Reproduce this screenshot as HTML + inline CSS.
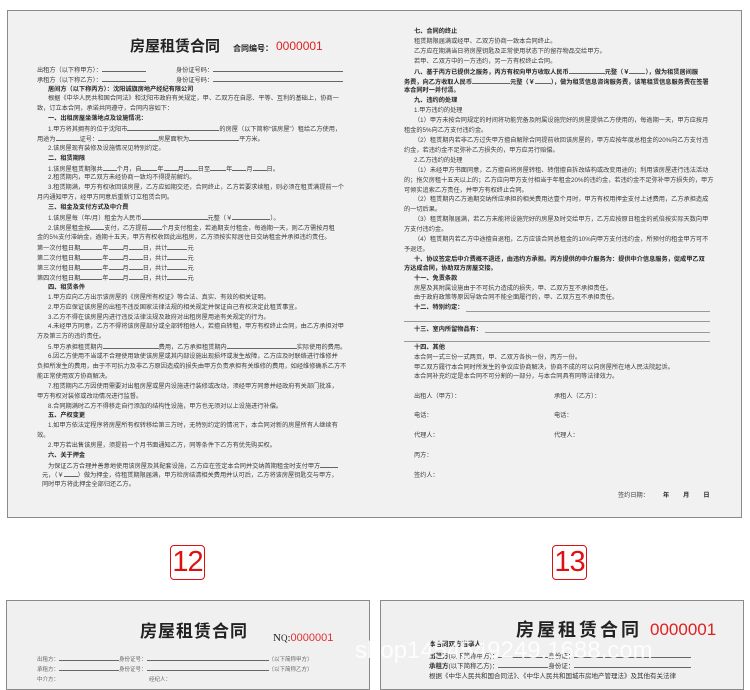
<!DOCTYPE html>
<html><head><meta charset="utf-8"><style>
*{margin:0;padding:0;box-sizing:border-box}
body{width:750px;height:681px;background:#fff;position:relative;overflow:hidden;font-family:"Liberation Sans","Noto Sans CJK SC",sans-serif}
.p{position:absolute;background:#f1f1f1;border:1px solid #8a8a8a}
.l{position:absolute;font-size:6.2px;line-height:8px;white-space:nowrap;color:#3c3c3c}
.b{font-weight:bold;color:#2a2a2a}
.u{display:inline-block;border-bottom:0.8px solid #666;height:6px;vertical-align:baseline}
.hr{position:absolute;height:0;border-top:1px solid #999}
.num{position:absolute;border:1.5px solid #e01010;border-radius:4px;color:#e01010;font-size:29px;line-height:33px;text-align:center;font-family:"Liberation Sans Narrow","Liberation Sans",sans-serif;width:35px;height:35px;letter-spacing:-1px}
</style></head><body>

<div class="p" style="left:7px;top:10px;width:735px;height:508px"></div>
<div style="position:absolute;left:130px;top:38px;font-size:15px;font-weight:bold;color:#222;line-height:18px">房屋租赁合同</div>
<div style="position:absolute;left:233px;top:43px;font-size:8px;font-weight:bold;color:#222">合同编号：</div>
<div style="position:absolute;left:276px;top:39px;font-size:12px;color:#e02020;line-height:14px">0000001</div>

<div class="l" style="left:37px;top:66px">出租方（以下称甲方）：<span class="u" style="width:44px"></span><span style="margin-left:30px">身份证号码：</span><span class="u" style="width:130px"></span></div>
<div class="l" style="left:37px;top:76px">承租方（以下称乙方）：<span class="u" style="width:44px"></span><span style="margin-left:30px">身份证号码：</span><span class="u" style="width:130px"></span></div>
<div class="l b" style="left:48px;top:86px">居间方（以下称丙方）：沈阳诚旗房地产经纪有限公司</div>
<div class="l" style="left:48px;top:95px">根据《中华人民共和国合同法》和沈阳市政府有关规定，甲、乙双方在自愿、平等、互利的基础上，协商一</div>
<div class="l" style="left:37px;top:105px">致，订立本合同，承诺共同遵守，合同内容如下：</div>
<div class="l b" style="left:48px;top:115px">一、出租房屋坐落地点及设施情况：</div>
<div class="l" style="left:48px;top:125px">1.甲方将其拥有的位于沈阳市<span class="u" style="width:92px"></span>的房屋（以下简称“该房屋”）租给乙方使用，</div>
<div class="l" style="left:37px;top:135px">用途为<span class="u" style="width:24px"></span>证号：<span class="u" style="width:60px"></span>房屋面积为<span class="u" style="width:50px"></span>平方米。</div>
<div class="l" style="left:48px;top:145px">2.该房屋现有装修及设施情况见特别约定。</div>
<div class="l b" style="left:48px;top:155px">二、租赁期限</div>
<div class="l" style="left:48px;top:165px">1.该房屋租赁期限共<span class="u" style="width:14px"></span>个月，自<span class="u" style="width:16px"></span>年<span class="u" style="width:14px"></span>月<span class="u" style="width:14px"></span>日至<span class="u" style="width:16px"></span>年<span class="u" style="width:14px"></span>月<span class="u" style="width:14px"></span>日。</div>
<div class="l" style="left:48px;top:174px">2.租赁期内，甲乙双方未经协商一致均不得提前解约。</div>
<div class="l" style="left:48px;top:184px">3.租赁期满，甲方有权收回该房屋，乙方应如期交还，合同终止，乙方若要求续租，则必须在租赁满提前一个</div>
<div class="l" style="left:37px;top:194px">月内通知甲方，经甲方同意后重新订立租赁合同。</div>
<div class="l b" style="left:48px;top:204px">三、租金及支付方式及中介费</div>
<div class="l" style="left:48px;top:214px">1.该房屋每（年/月）租金为人民币<span class="u" style="width:66px"></span>元整（￥<span class="u" style="width:38px"></span>）。</div>
<div class="l" style="left:48px;top:224px">2.该房屋租金按<span class="u" style="width:14px"></span>支付，乙方提前<span class="u" style="width:14px"></span>个月支付租金，若逾期支付租金，每逾期一天，则乙方需按月租</div>
<div class="l" style="left:37px;top:234px">金的5%支付滞纳金，逾期十五天，甲方有权收回此出租房，乙方须按实际居住日交纳租金并承担违约责任。</div>
<div class="l" style="left:37px;top:244px">第一次付租日期<span class="u" style="width:22px"></span>年<span class="u" style="width:14px"></span>月<span class="u" style="width:14px"></span>日，共计<span class="u" style="width:20px"></span>元</div>
<div class="l" style="left:37px;top:254px">第二次付租日期<span class="u" style="width:22px"></span>年<span class="u" style="width:14px"></span>月<span class="u" style="width:14px"></span>日，共计<span class="u" style="width:20px"></span>元</div>
<div class="l" style="left:37px;top:264px">第三次付租日期<span class="u" style="width:22px"></span>年<span class="u" style="width:14px"></span>月<span class="u" style="width:14px"></span>日，共计<span class="u" style="width:20px"></span>元</div>
<div class="l" style="left:37px;top:274px">第四次付租日期<span class="u" style="width:22px"></span>年<span class="u" style="width:14px"></span>月<span class="u" style="width:14px"></span>日，共计<span class="u" style="width:20px"></span>元</div>
<div class="l b" style="left:48px;top:284px">四、租赁条件</div>
<div class="l" style="left:48px;top:294px">1.甲方应向乙方出示该房屋的《房屋所有权证》等合法、真实、有效的相关证明。</div>
<div class="l" style="left:48px;top:304px">2.甲方应保证该房屋的出租不违反国家法律法规的相关规定并保证自己有权决定此租赁事宜。</div>
<div class="l" style="left:48px;top:314px">3.乙方不得在该房屋内进行违反法律法规及政府对出租房屋用途有关规定的行为。</div>
<div class="l" style="left:48px;top:323px">4.未经甲方同意，乙方不得将该房屋部分或全部转租他人，若擅自转租，甲方有权终止合同，由乙方承担对甲</div>
<div class="l" style="left:37px;top:333px">方及第三方的违约责任。</div>
<div class="l" style="left:48px;top:343px">5.甲方承担租赁期内<span class="u" style="width:56px"></span>费用，乙方承担租赁期内<span class="u" style="width:70px"></span>实际使用的费用。</div>
<div class="l" style="left:48px;top:353px">6.因乙方使用不当或不合理使用致使该房屋或其内部设施出现损坏或发生故障，乙方应及时联络进行维修并</div>
<div class="l" style="left:37px;top:363px">负担所发生的费用，由于不可抗力及非乙方原因造成的损失由甲方负责承担有关维修的费用，如经维修确系乙方不</div>
<div class="l" style="left:37px;top:373px">能正常使用双方协商解决。</div>
<div class="l" style="left:48px;top:383px">7.租赁期内乙方因使用需要对出租房屋或屋内设施进行装修或改动，须经甲方同意并经政府有关部门批准，</div>
<div class="l" style="left:37px;top:393px">甲方有权对装修或改动情况进行监督。</div>
<div class="l" style="left:48px;top:403px">8.合同期满时乙方不得移走自行添加的结构性设施，甲方也无须对以上设施进行补偿。</div>
<div class="l b" style="left:48px;top:412px">五、产权变更</div>
<div class="l" style="left:48px;top:422px">1.如甲方依法定程序将房屋所有权转移给第三方时，无特别约定的情况下，本合同对新的房屋所有人继续有</div>
<div class="l" style="left:37px;top:432px">效。</div>
<div class="l" style="left:48px;top:442px">2.甲方若出售该房屋，须提前一个月书面通知乙方，同等条件下乙方有优先购买权。</div>
<div class="l b" style="left:48px;top:452px">六、关于押金</div>
<div class="l" style="left:48px;top:462px">为保证乙方合理并善意地使用该房屋及其配套设施，乙方应在签定本合同并交纳首期租金时支付甲方<span class="u" style="width:18px"></span></div>
<div class="l" style="left:42px;top:471px">元，（￥<span class="u" style="width:14px"></span>）做为押金，待租赁期限届满，甲方检房结清相关费用并认可后，乙方将该房屋钥匙交与甲方，</div>
<div class="l" style="left:42px;top:481px">同时甲方将此押金全部归还乙方。</div>

<div class="l b" style="left:414px;top:28px">七、合同的终止</div>
<div class="l" style="left:414px;top:38px">租赁期限届满或经甲、乙双方协商一致本合同终止。</div>
<div class="l" style="left:414px;top:48px">乙方应在期满当日将房屋钥匙及正常使用状态下的留存物品交给甲方。</div>
<div class="l" style="left:414px;top:58px">若甲、乙双方中的一方违约，另一方有权终止合同。</div>
<div class="l b" style="left:414px;top:68px">八、基于丙方已提供之服务，丙方有权向甲方收取人民币<span class="u" style="width:36px"></span>元整（￥<span class="u" style="width:16px"></span>），做为租赁居间服</div>
<div class="l b" style="left:404px;top:78px">务费，向乙方收取人民币<span class="u" style="width:38px"></span>元整（￥<span class="u" style="width:16px"></span>），做为租赁信息咨询服务费，该笔租赁信息服务费在签署</div>
<div class="l b" style="left:404px;top:87px">本合同时一并付清。</div>
<div class="l b" style="left:414px;top:97px">九、违约的处理</div>
<div class="l" style="left:414px;top:107px">1.甲方违约的处理</div>
<div class="l" style="left:414px;top:117px">（1）甲方未按合同规定的时间将功能完备及附属设施完好的房屋提供乙方使用的，每逾期一天，甲方应按月</div>
<div class="l" style="left:404px;top:127px">租金的5%向乙方支付违约金。</div>
<div class="l" style="left:414px;top:137px">（2）租赁期内若非乙方过失甲方擅自解除合同提前收回该房屋的，甲方应按年度总租金的20%向乙方支付违</div>
<div class="l" style="left:404px;top:147px">约金，若违约金不足弥补乙方损失的，甲方应另行赔偿。</div>
<div class="l" style="left:414px;top:157px">2.乙方违约的处理</div>
<div class="l" style="left:414px;top:167px">（1）未经甲方书面同意，乙方擅自将房屋转租、转借擅自拆改结构或改变用途的；利用该房屋进行违法活动</div>
<div class="l" style="left:404px;top:177px">的；拖欠房租十五天以上的；乙方应向甲方支付相当于年租金20%的违约金，若违约金不足弥补甲方损失的，甲方</div>
<div class="l" style="left:404px;top:187px">可倾实追索乙方责任，并甲方有权终止合同。</div>
<div class="l" style="left:414px;top:196px">（2）租赁期内乙方逾期交纳所应承担的相关费用达壹个月时，甲方有权用押金支付上述费用，乙方承担造成</div>
<div class="l" style="left:404px;top:206px">的一切后果。</div>
<div class="l" style="left:414px;top:216px">（3）租赁期限届满，若乙方未能将设施完好的房屋及时交给甲方，乙方应按原日租金的贰倍按实际天数向甲</div>
<div class="l" style="left:404px;top:226px">方支付违约金。</div>
<div class="l" style="left:414px;top:236px">（4）租赁期内若乙方中途擅自退租，乙方应该合同总租金的10%向甲方支付违约金，所预付的租金甲方可不</div>
<div class="l" style="left:404px;top:246px">予退还。</div>
<div class="l b" style="left:414px;top:256px">十、协议签定后中介费概不退还，由违约方承担。丙方提供的中介服务为：提供中介信息服务，促成甲乙双</div>
<div class="l b" style="left:404px;top:265px">方达成合同，协助双方房屋交接。</div>
<div class="l b" style="left:414px;top:275px">十一、免责条款</div>
<div class="l" style="left:414px;top:285px">房屋及其附属设施由于不可抗力造成的损失，甲、乙双方互不承担责任。</div>
<div class="l" style="left:414px;top:294px">由于政府政策等原因导致合同不能全面履行的，甲、乙双方互不承担责任。</div>
<div class="l b" style="left:414px;top:304px">十二、特别约定：</div>
<div class="hr" style="left:466px;top:311px;width:244px"></div>
<div class="hr" style="left:404px;top:321px;width:306px"></div>
<div class="l b" style="left:414px;top:326px">十三、室内所留物品有：</div>
<div class="hr" style="left:485px;top:332px;width:225px"></div>
<div class="hr" style="left:404px;top:341px;width:306px"></div>
<div class="l b" style="left:414px;top:344px">十四、其他</div>
<div class="l" style="left:414px;top:354px">本合同一式三份一式两页，甲、乙双方各执一份，丙方一份。</div>
<div class="l" style="left:414px;top:364px">甲乙双方履行本合同时所发生的争议应协商解决，协商不成的可以向房屋所在地人民法院起诉。</div>
<div class="l" style="left:414px;top:373px">本合同补充约定是本合同不可分割的一部分，与本合同具有同等法律效力。</div>
<div class="l" style="left:414px;top:393px">出租人（甲方）：</div><div class="l" style="left:554px;top:393px">承租人（乙方）：</div>
<div class="l" style="left:414px;top:412px">电话：</div><div class="l" style="left:554px;top:412px">电话：</div>
<div class="l" style="left:414px;top:432px">代理人：</div><div class="l" style="left:554px;top:432px">代理人：</div>
<div class="l" style="left:414px;top:452px">丙方：</div>
<div class="l" style="left:414px;top:472px">签约人：</div>
<div class="l" style="left:618px;top:492px">签约日期：<span style="margin-left:14px" class="b">年</span><span style="margin-left:14px" class="b">月</span><span style="margin-left:14px" class="b">日</span></div>

<div class="num" style="left:170px;top:545px">12</div>
<div class="num" style="left:552px;top:545px">13</div>

<div class="p" style="left:6px;top:600px;width:364px;height:90px;background:#f0f0f0"></div>
<div style="position:absolute;left:140px;top:622px;font-size:17px;font-weight:bold;color:#222;letter-spacing:1px;line-height:20px">房屋租赁合同</div>
<div style="position:absolute;left:273px;top:632px;font-size:11px;font-family:'Liberation Serif',serif;color:#222;line-height:13px">N<span style="font-size:9px">Q</span>:<span style="color:#e03030;font-family:'Liberation Sans',sans-serif">0000001</span></div>
<div class="l" style="left:37px;top:655px;font-size:5.5px;color:#666">出租方：<span class="u" style="width:60px"></span>身份证号：<span class="u" style="width:122px"></span>（以下简称甲方）</div>
<div class="l" style="left:37px;top:665px;font-size:5.5px;color:#666">承租方：<span class="u" style="width:60px"></span>身份证号：<span class="u" style="width:122px"></span>（以下简称乙方）</div>
<div class="l" style="left:37px;top:676px;font-size:5.5px;color:#666">中介方：<span style="margin-left:90px">经纪人：</span></div>

<div class="p" style="left:380px;top:600px;width:364px;height:90px;background:#f0f0f0"></div>
<div style="position:absolute;left:516px;top:620px;font-size:18px;font-weight:bold;color:#222;letter-spacing:3px;line-height:21px">房屋租赁合同</div>
<div style="position:absolute;left:650px;top:620px;font-size:17px;color:#e02020;line-height:20px;font-family:'Liberation Sans Narrow','Liberation Sans',sans-serif">0000001</div>
<div class="l b" style="left:429px;top:641px;font-size:6.5px">本合同双方当事人：</div>
<div class="l" style="left:429px;top:652px;font-size:6.5px;color:#333"><b>出租方</b>(以下简称甲方)：<span class="u" style="width:50px"></span>身份证：<span class="u" style="width:117px"></span></div>
<div class="l" style="left:429px;top:662px;font-size:6.5px;color:#333"><b>承租方</b>(以下简称乙方)：<span class="u" style="width:50px"></span>身份证：<span class="u" style="width:117px"></span></div>
<div class="l" style="left:429px;top:673px;font-size:6.5px;color:#333">根据《中华人民共和国合同法》、《中华人民共和国城市房地产管理法》及其他有关法律</div>
<div style="position:absolute;left:355px;top:637px;font-size:24px;color:rgba(255,255,255,0.85);white-space:nowrap;line-height:28px">shop1454549249.1688.com</div>
</body></html>
